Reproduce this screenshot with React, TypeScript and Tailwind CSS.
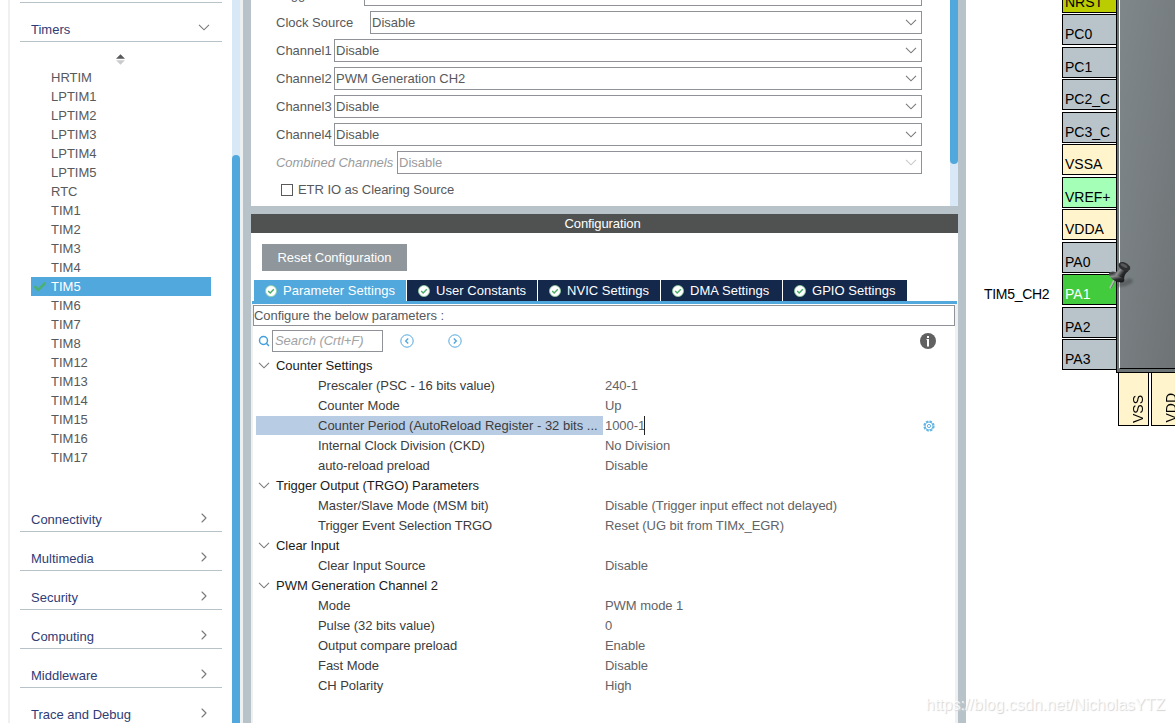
import { Check, ChevronRight, Search } from "lucide-react";

const timers = [
  "HRTIM",
  "LPTIM1",
  "LPTIM2",
  "LPTIM3",
  "LPTIM4",
  "LPTIM5",
  "RTC",
  "TIM1",
  "TIM2",
  "TIM3",
  "TIM4",
  "TIM5",
  "TIM6",
  "TIM7",
  "TIM8",
  "TIM12",
  "TIM13",
  "TIM14",
  "TIM15",
  "TIM16",
  "TIM17",
];

const categories = [
  "Connectivity",
  "Multimedia",
  "Security",
  "Computing",
  "Middleware",
  "Trace and Debug",
];

const modes = [
  { label: "Trigger Source", value: "Disable", width: "w-[88px]" },
  { label: "Clock Source", value: "Disable", width: "w-[94px]" },
  { label: "Channel1", value: "Disable", width: "w-[58px]" },
  { label: "Channel2", value: "PWM Generation CH2", width: "w-[58px]" },
  { label: "Channel3", value: "Disable", width: "w-[58px]" },
  { label: "Channel4", value: "Disable", width: "w-[58px]" },
  {
    label: "Combined Channels",
    value: "Disable",
    width: "w-[121px]",
    disabled: true,
  },
];

const tabs = [
  { label: "Parameter Settings", width: "w-[152px]", active: true },
  { label: "User Constants", width: "w-[130px]" },
  { label: "NVIC Settings", width: "w-[122px]" },
  { label: "DMA Settings", width: "w-[121px]" },
  { label: "GPIO Settings", width: "w-[124px]" },
];

const groups = [
  {
    title: "Counter Settings",
    params: [
      ["Prescaler (PSC - 16 bits value)", "240-1"],
      ["Counter Mode", "Up"],
      ["Counter Period (AutoReload Register - 32 bits ...", "1000-1"],
      ["Internal Clock Division (CKD)", "No Division"],
      ["auto-reload preload", "Disable"],
    ],
  },
  {
    title: "Trigger Output (TRGO) Parameters",
    params: [
      [
        "Master/Slave Mode (MSM bit)",
        "Disable (Trigger input effect not delayed)",
      ],
      ["Trigger Event Selection TRGO", "Reset (UG bit from TIMx_EGR)"],
    ],
  },
  { title: "Clear Input", params: [["Clear Input Source", "Disable"]] },
  {
    title: "PWM Generation Channel 2",
    params: [
      ["Mode", "PWM mode 1"],
      ["Pulse (32 bits value)", "0"],
      ["Output compare preload", "Enable"],
      ["Fast Mode", "Disable"],
      ["CH Polarity", "High"],
    ],
  },
];

const pins = [
  { name: "NRST", color: "bg-[#bbcc00]" },
  { name: "PC0", color: "bg-[#b9c4ca]" },
  { name: "PC1", color: "bg-[#b9c4ca]" },
  { name: "PC2_C", color: "bg-[#b9c4ca]" },
  { name: "PC3_C", color: "bg-[#b9c4ca]" },
  { name: "VSSA", color: "bg-[#fff4cb]" },
  { name: "VREF+", color: "bg-[#a4ffb7]" },
  { name: "VDDA", color: "bg-[#fff4cb]" },
  { name: "PA0", color: "bg-[#b9c4ca]" },
  { name: "PA1", color: "bg-[#42cc3d] text-white", signal: "TIM5_CH2" },
  { name: "PA2", color: "bg-[#b9c4ca]" },
  { name: "PA3", color: "bg-[#b9c4ca]" },
];

const Chevron: React.FC<{ className?: string }> = ({ className = "" }) => (
  <svg
    viewBox="0 0 12 7"
    className={`h-[7px] w-3 shrink-0 fill-none stroke-[#77797b] ${className}`}
  >
    <path d="M1 .8 6 5.8 11 .8" strokeWidth="1.1" />
  </svg>
);

const StatusIcon = () => (
  <svg viewBox="0 0 12 12" className="size-3 shrink-0">
    <circle cx="6" cy="6" r="5.5" fill="#fff" stroke="#8fd0a0" strokeWidth=".8" />
    <path
      d="m3.2 5.9 2 2 3.6-3.7"
      fill="none"
      stroke="#49ad65"
      strokeWidth="1.4"
    />
  </svg>
);

const StepButton: React.FC<{ d: string }> = ({ d }) => (
  <button>
    <svg viewBox="0 0 14 14" className="size-3.5 fill-none stroke-[#50a8de]">
      <circle cx="7" cy="7" r="6.2" />
      <path d={d} strokeWidth="1.4" />
    </svg>
  </button>
);

const PushPin = () => (
  <svg
    viewBox="0 0 28 34"
    className="absolute left-[141px] top-[259px] z-10 h-[34px] w-7"
  >
    <defs>
      <linearGradient id="pin-body" x1="0" y1="0" x2="1" y2="0.6">
        <stop offset="0" stopColor="#6b6c6e" />
        <stop offset="0.3" stopColor="#3a3b3d" />
        <stop offset="0.5" stopColor="#8e8f91" />
        <stop offset="0.75" stopColor="#2a2b2d" />
        <stop offset="1" stopColor="#151618" />
      </linearGradient>
      <filter id="pin-shadow" x="-30%" y="-30%" width="160%" height="160%">
        <feGaussianBlur stdDeviation="1" />
      </filter>
    </defs>
    <path
      d="M8 27 14 22 19 21 22 19 26 21 25 24 19 27 13 28Z"
      fill="#34373a"
      opacity=".4"
      filter="url(#pin-shadow)"
    />
    <path d="M7.5 20.5 3 29.5" stroke="#b5b7b8" strokeWidth="2" />
    <path d="M8.5 21 4 29.5" stroke="#66696b" strokeWidth=".8" />
    <ellipse
      cx="9.7"
      cy="18"
      rx="8.6"
      ry="4.3"
      transform="rotate(28 9.7 18)"
      fill="url(#pin-body)"
    />
    <path
      d="M12.5 6.5 21.5 12C19.3 13.3 17.5 15.5 17 19.5L5 14.5C9.5 13.5 12 11 12.5 6.5Z"
      fill="url(#pin-body)"
    />
    <ellipse
      cx="17.4"
      cy="7.6"
      rx="6.3"
      ry="3.9"
      transform="rotate(28 17.4 7.6)"
      fill="#2e2f31"
    />
    <ellipse
      cx="17"
      cy="6.6"
      rx="3.8"
      ry="1.5"
      transform="rotate(28 17 6.6)"
      fill="#56585a"
    />
  </svg>
);

const Sidebar = () => (
  <aside className="flex w-[243px] shrink-0 bg-white">
    <div className="ml-2 w-0.5 bg-[#f0f0f0]" />
    <div className="flex w-[222px] flex-col px-2.5">
      <div className="mt-0.5 h-px shrink-0 bg-[#b7c3c9]" />
      <div className="flex h-[39px] shrink-0 items-center justify-between border-b border-[#b7c3c9] pl-[11px] pr-3 text-[#2f3c75]">
        <span className="pt-[15px]">Timers</span>
        <Chevron className="mt-[11px]" />
      </div>
      <div className="flex h-[26px] shrink-0 justify-center pt-3">
        <svg viewBox="0 0 9 11" className="mr-px h-[11px] w-[9px]">
          <path d="M0 4.7 4.5 .2 9 4.7Z" fill="#58595b" />
          <path d="M0 6.3h9l-4.5 4.5Z" fill="#c9cbcc" />
        </svg>
      </div>
      <ul className="mx-[11px] shrink-0">
        {timers.map((name) => (
          <li
            key={name}
            className={`flex h-[19px] items-center ${
              name === "TIM5" ? "bg-[#51a8dd] text-white" : "text-[#58595b]"
            }`}
          >
            <span className="w-5 pl-0.5">
              {name === "TIM5" && (
                <Check
                  className="size-[14px] text-[#4cb073]"
                  strokeWidth={4.5}
                />
              )}
            </span>
            {name}
          </li>
        ))}
      </ul>
      <div className="mt-[26px]">
        {categories.map((name) => (
          <div
            key={name}
            className="flex h-[39px] items-end justify-between border-b border-[#b7c3c9] pb-0.5 pl-[11px] pr-2.5 text-[#2f3c75]"
          >
            <span>{name}</span>
            <ChevronRight
              className="mb-[3px] size-4 text-[#77797b]"
              strokeWidth={1.6}
            />
          </div>
        ))}
      </div>
    </div>
    <div className="w-2 bg-[#d9e8f7] pt-[155px]">
      <div className="h-[580px] rounded-t bg-[#51a8dd]" />
    </div>
    <div className="w-[3px] bg-[#edf0f0]" />
  </aside>
);

const ModePanel = () => (
  <section className="flex h-[206px] shrink-0 overflow-hidden bg-white">
    <div className="-mt-[17px] flex w-[671px] flex-col gap-[5px] pl-[25px]">
      {modes.map(({ label, value, width, disabled }) => (
        <div
          key={label}
          className={`flex h-[23px] shrink-0 items-center whitespace-nowrap ${
            disabled ? "text-[#999b9d]" : "text-[#58595b]"
          }`}
        >
          <span
            className={`shrink-0 ${width} ${
              disabled ? "italic tracking-[-0.04px]" : ""
            }`}
          >
            {label}
          </span>
          <div className="flex h-full grow items-center justify-between border border-[#8f9297] pl-px pr-1">
            {value}
            <Chevron className={disabled ? "opacity-40" : ""} />
          </div>
        </div>
      ))}
      <label className="flex items-center pl-[5px] pt-px text-[#58595b]">
        <span className="mr-[5px] size-3 border border-[#58595b]" />
        <span className="tracking-[-0.05px]">ETR IO as Clearing Source</span>
      </label>
    </div>
    <div className="ml-7 w-2 bg-[#d9e8f7]">
      <div className="h-[164px] rounded-b bg-[#51a8dd]" />
    </div>
  </section>
);

const Parameters = () => (
  <div className="grow border-l-2 border-r-[3px] border-[#eff1f1]">
    <div className="mt-px flex h-[21px] items-center border border-[#8f9297] tracking-[-0.07px] text-[#58595b]">
      Configure the below parameters :
    </div>
    <div className="flex h-[29px] items-center pl-[5px] pr-[19px]">
      <Search className="size-3 text-[#419fdb]" strokeWidth={3} />
      <div className="ml-0.5 flex h-[22px] w-[111px] items-center border border-[#8f9297] pl-0.5 italic tracking-[-0.05px] text-[#a0a2a4]">
        Search (Crtl+F)
      </div>
      <div className="ml-[17px] flex gap-[34px]">
        <StepButton d="M8.2 4.4 5.7 7l2.5 2.6" />
        <StepButton d="M5.8 4.4 8.3 7 5.8 9.6" />
      </div>
      <svg viewBox="0 0 16 16" className="ml-auto size-4">
        <circle cx="8" cy="8" r="8" fill="#616161" />
        <path d="M7 3h2v2H7ZM6.5 6H9v7.5H7V7h-.5Z" fill="#fff" />
      </svg>
    </div>
    {groups.map(({ title, params }) => (
      <div key={title}>
        <div className="flex h-5 items-center pl-[5px] tracking-[-0.03px] text-[#1b1b1b]">
          <Chevron className="mr-1.5" />
          {title}
        </div>
        {params.map(([label, value]) => {
          const selected = value === "1000-1";
          return (
            <div
              key={label}
              className="flex h-5 items-center whitespace-nowrap pl-[3px] tracking-[-0.05px]"
            >
              <div
                className={`flex h-[19px] w-[347px] items-center pl-[62px] text-[#3c3c3d] ${
                  selected ? "bg-[#b8cce4] tracking-normal" : ""
                }`}
              >
                {label}
              </div>
              <div className="flex h-[19px] grow items-center pl-0.5 pr-5 text-[#626366]">
                {value}
                {selected && (
                  <>
                    <span className="-ml-[1.5px] h-full w-px bg-[#222]" />
                    <svg
                      viewBox="0 0 12 12"
                      className="ml-auto mt-0.5 size-3 fill-none stroke-[#65b5e3]"
                    >
                      <circle
                        cx="6"
                        cy="6"
                        r="4.9"
                        strokeWidth="1.5"
                        strokeDasharray="2.5 1.35"
                      />
                      <circle cx="6" cy="6" r="4" />
                      <circle cx="6" cy="6" r="1.6" />
                    </svg>
                  </>
                )}
              </div>
            </div>
          );
        })}
      </div>
    ))}
  </div>
);

const Configuration = () => (
  <section className="flex grow flex-col bg-white">
    <h2 className="flex h-[19px] items-center justify-center bg-[#505251] pr-1 tracking-[-0.1px] text-white">
      Configuration
    </h2>
    <button className="ml-[11px] mt-[11px] h-[27px] w-[145px] bg-[#8f979c] tracking-[-0.05px] text-white">
      Reset Configuration
    </button>
    <div className="ml-[3px] mt-[9px] flex h-[21px] gap-px">
      {tabs.map(({ label, width, active }) => (
        <div
          key={label}
          className={`flex items-center whitespace-nowrap pl-[11px] tracking-[0.04px] text-white ${width} ${
            active ? "bg-[#51a8dd]" : "bg-[#14284b]"
          }`}
        >
          <StatusIcon />
          <span className="ml-1.5">{label}</span>
        </div>
      ))}
    </div>
    <div className="ml-px mr-px h-[3px] bg-[#51a8dd]" />
    <Parameters />
  </section>
);

const Pinout = () => (
  <main className="relative grow overflow-hidden bg-white text-[14px] text-black">
    <div className="flex h-[373px]">
      <div className="-mt-[18px] w-[150px] shrink-0">
        {pins.map(({ name, color, signal }, i) => (
          <div
            key={name}
            className={`flex h-[31px] items-end ${
              i === 0 ? "" : i % 2 ? "mt-px" : "mt-0.5"
            }`}
          >
            <span className="w-24 shrink-0 pl-[18px] leading-[22px] tracking-[-0.3px]">
              {signal}
            </span>
            <span
              className={`flex h-full w-[55px] shrink-0 items-end border border-black pl-0.5 leading-5 ${color}`}
            >
              {name}
            </span>
          </div>
        ))}
      </div>
      <div className="flex grow border-b border-l border-black bg-[#6c7375] pb-[3px] pl-0.5">
        <div className="grow border-b border-l border-b-black border-l-white bg-linear-to-br from-[#80878a] to-[#6e7476]" />
      </div>
    </div>
    <div className="-mt-px ml-[152px] flex gap-0.5">
      {["VSS", "VDD"].map((name) => (
        <div
          key={name}
          className="flex h-[54px] w-[31px] shrink-0 items-center border border-black bg-[#fff4cb] pl-[9px]"
        >
          <span className="rotate-180 self-end pt-0.5 leading-5 [writing-mode:vertical-rl]">
            {name}
          </span>
        </div>
      ))}
    </div>
    <PushPin />
  </main>
);

export default function App() {
  return (
    <div className="relative flex h-[723px] w-[1175px] overflow-hidden bg-[#b7c3c9] font-['Liberation_Sans',Arial,sans-serif] text-[13px] leading-[19px]">
      <Sidebar />
      <div className="mx-2 flex w-[707px] shrink-0 flex-col gap-2">
        <ModePanel />
        <Configuration />
      </div>
      <Pinout />
      <span className="absolute bottom-[9px] right-[10px] z-20 text-[16px] text-white/80 [text-shadow:1px_1px_1px_#d4d4d4]">
        https://blog.csdn.net/NicholasYTZ
      </span>
    </div>
  );
}
